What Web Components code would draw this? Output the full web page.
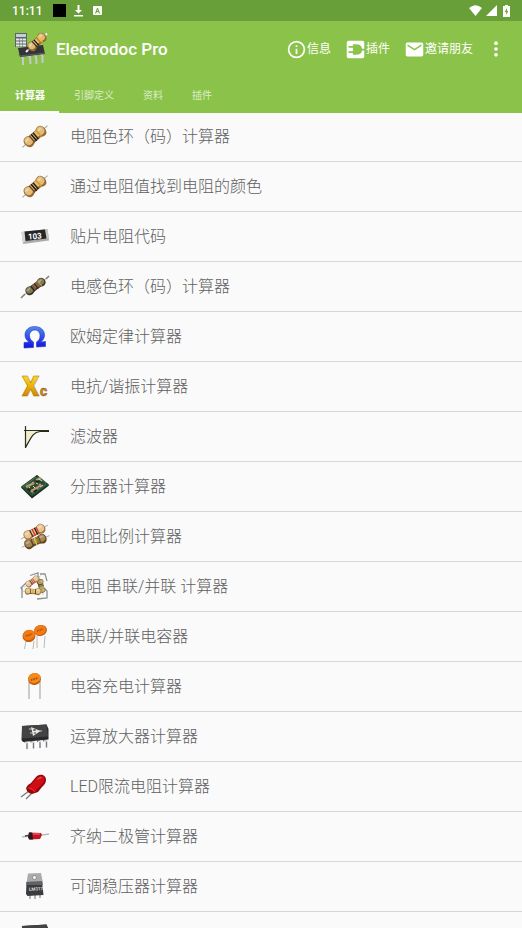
<!DOCTYPE html>
<html lang="zh-CN">
<head>
<meta charset="utf-8">
<meta name="viewport" content="width=device-width, initial-scale=1">
<title>Electrodoc Pro</title>
<style>
  body {
    margin: 0;
    background: #fafafa;
    font-family: Roboto, "Noto Sans CJK SC", sans-serif;
  }
</style>
</head>
<body>
<app-shell>
  <status-bar slot="top">11:11</status-bar>
  <app-bar slot="top">
    Electrodoc Pro
    <action-button slot="actions" icon="info">信息</action-button>
    <action-button slot="actions" icon="plugin">插件</action-button>
    <action-button slot="actions" icon="mail">邀请朋友</action-button>
    <action-button slot="actions" icon="more"></action-button>
  </app-bar>
  <tab-strip slot="top">
    <tab-item selected>计算器</tab-item>
    <tab-item>引脚定义</tab-item>
    <tab-item>资料</tab-item>
    <tab-item>插件</tab-item>
  </tab-strip>

  <tool-row icon="resistor">电阻色环（码）计算器</tool-row>
  <tool-row icon="resistor">通过电阻值找到电阻的颜色</tool-row>
  <tool-row icon="smd">贴片电阻代码</tool-row>
  <tool-row icon="inductor">电感色环（码）计算器</tool-row>
  <tool-row icon="ohm">欧姆定律计算器</tool-row>
  <tool-row icon="reactance">电抗/谐振计算器</tool-row>
  <tool-row icon="filter">滤波器</tool-row>
  <tool-row icon="board">分压器计算器</tool-row>
  <tool-row icon="ratio">电阻比例计算器</tool-row>
  <tool-row icon="series">电阻 串联/并联 计算器</tool-row>
  <tool-row icon="capacitors">串联/并联电容器</tool-row>
  <tool-row icon="capacitor">电容充电计算器</tool-row>
  <tool-row icon="opamp">运算放大器计算器</tool-row>
  <tool-row icon="led">LED限流电阻计算器</tool-row>
  <tool-row icon="zener">齐纳二极管计算器</tool-row>
  <tool-row icon="regulator">可调稳压器计算器</tool-row>
  <tool-row icon="chip"></tool-row>
</app-shell>

<script>
// a resistor lying flat around 0,0 - callers rotate it into place
const resistor = (place, light, dark, bands) => `
  <g transform="${place}">
    <path d="M-17 0H17" stroke="#aaa9a4" stroke-width="1"/>
    <path d="M-8.500-5C-6-5-5-3.800-3.500-3.800H3.500C5-3.800 6-5 8.500-5C11.500-5 13-2.500 13 0S11.500 5 8.500 5C6 5 5 3.800 3.500 3.800H-3.500C-5 3.800-6 5-8.500 5C-11.500 5-13 2.500-13 0S-11.500-5-8.500-5Z" fill="${dark}"/>
    <path d="M-8.500-4.500C-6-4.500-5-3.300-3.500-3.300H3.500C5-3.300 6-4.500 8.500-4.500C11-4.500 12-2.600 12-.500S10.500 3 8 3C6 3 5 2 3.500 2H-3.500C-5 2-6 3-8 3C-10.500 3-12 1-12-.500S-11-4.500-8.500-4.500Z" fill="${light}"/>
    ${bands.map(([x, color]) => `<path d="M${x}-3.700V3.700" stroke="${color}" stroke-width="1.500"/>`).join('')}
    <ellipse cx="8" cy="-2" rx="2.500" ry="1" fill="#fff" opacity=".35"/>
    <ellipse cx="-8.500" cy="-2" rx="2.500" ry="1" fill="#fff" opacity=".35"/>
  </g>`;

const beige = ['#e0bc78', '#96692f'];
const chipBody = `
  <path d="M5 21L7 20L8 22V28M11.500 21L13.500 20L14.500 21.500V27.500M18 20.500L20 19.500L21 21V27M24 20L26 19L27.500 20.500V26.500" stroke="#77777b" stroke-width="1.400"/>
  <path d="M3 5L27.500 3.500L29.500 8V18.500L4 21L2.500 19Z" fill="#29292b"/>
  <path d="M3 5L27.500 3.500L29 15.500L3 17.500Z" fill="#434346"/>
  <path d="M6 21.500H9M12.500 21H15.500M19 20.500H22M25 20H28" stroke="#ddd" stroke-width="1.400"/>`;

const icons = {
  resistor: resistor('translate(16 15.500) rotate(-41) scale(.98 1.150)', ...beige, [[-4, '#70451f'], [-1.500, '#171512'], [1, '#2b2015'], [5, '#d69a20']]),

  smd: `
    <path d="M2.500 11L28.500 8L30 19.500L4 23Z" fill="#aaa"/>
    <path d="M2.500 11L6 10.500L7 20L4 22Z" fill="#d4d4d2"/>
    <path d="M25.500 8.500L28.500 8L30 17.500L27 18Z" fill="#c4c4c2"/>
    <path d="M5.500 10.500L26 8.500L27.500 17.500L6.500 20Z" fill="#252527"/>
    <text x="9" y="18" transform="rotate(-4 16 16)" font-family="Roboto, sans-serif" font-size="8" font-weight="700" fill="#fff">103</text>`,

  inductor: resistor('translate(16.500 15.500) rotate(-37) scale(.88)', '#827b5b', '#393824', [[-4, '#25251e'], [-2, '#8c432c'], [1, '#282820'], [3, '#994f37'], [6, '#b69545']]) + '<path d="M2 27L6 23M27 8L30 5" stroke="#8b7a72" stroke-width="1.500"/>',

  ohm: `
    <defs><linearGradient id="blue" x2="0" y2="1"><stop stop-color="#4e8cf0"/><stop offset="1" stop-color="#1012e2"/></linearGradient></defs>
    <path d="M5 21.500L10 21C7.500 19 6 17 6 14C6 9 10 5.500 15.500 5.500C21.500 5.500 25.500 9 25.500 14C25.500 17 24 19.500 21.500 21L26.500 20.500V25.500L17.500 26V21C20 19.500 21 17.500 21 14.500C21 11.500 19 9 16 9C12.500 9 10.500 11.500 10.500 14.500C10.500 17.500 12 19.500 14.500 21V26.500L5 27Z" fill="url(#blue)" stroke="#233bb5" stroke-width=".600"/>`,

  reactance: `
    <defs><linearGradient id="gold" x2="0" y2="1"><stop stop-color="#ffee35"/><stop offset=".500" stop-color="#e9ad09"/><stop offset="1" stop-color="#b86909"/></linearGradient></defs>
    <text x="3" y="25" font-family="Roboto, sans-serif" font-size="27" font-weight="900" fill="url(#gold)" stroke="#a66d12" stroke-width=".500">X</text>
    <text x="21" y="25" font-family="Roboto, sans-serif" font-size="14" font-weight="900" fill="#c98422" stroke="#80501c" stroke-width=".400">c</text>`,

  filter: `
    <path d="M6.500 10H21C14 11.500 11 17 6.500 25.500Z" fill="#f0efcc"/>
    <path d="M5 9.500H30M6.500 5V27" stroke="#2d301d" stroke-width="1.200" fill="none"/>
    <path d="M6.500 26.500C12 17 14 11 21 10.500H30" stroke="#22281c" stroke-width="1.200" fill="none"/>`,

  board: `
    <path d="M2 16.500L18 4L30 14.500L13 27.500Z" fill="#172719"/>
    <path d="M2 15.500L18 4L30 13.500L13 25.500Z" fill="#284b34"/>
    <path d="M4 16L17 6M13 23L27 13M19 6L27 12" stroke="#598064" stroke-width=".800"/>
    <path d="M7 16L15 12M12 20L21 15M17 9L22 7" stroke="#b6a577" stroke-width="2"/>
    <g fill="#c58b6b"><circle cx="9" cy="15" r="1.500"/><circle cx="14" cy="12" r="1.500"/><circle cx="13" cy="20" r="1.500"/><circle cx="18" cy="17" r="1.500"/><circle cx="21" cy="14" r="1.500"/></g>
    <path d="M10 16L11 17M17 12L19 13M21 16L24 14M20 8L23 10M14 15L16 17" stroke="#ded9c2" stroke-width="1"/>
    <path d="M15 21L18 19M9 18L11 20M17 10L20 11" stroke="#151b16" stroke-width="1.500"/>`,

  ratio: resistor('translate(16.500 20.500) rotate(-23) scale(.89 1)', '#a68655', '#62431f', [[-4, '#4d4337'], [0, '#e1c830'], [3, '#8a7b23'], [5, '#554b28']])
    + resistor('translate(15.500 11) rotate(-27) scale(.89 1)', '#e8c692', '#a7794a', [[-4, '#5c2c21'], [-1, '#e23329'], [2, '#1b1b1b'], [4, '#d13d31']]),

  series: `
    <path d="M11 4.500L19 2V7M21 3L26 3L28 10M3 19L2 17L7 12M3 16L3 27M18 28L28 27V20L24 16" stroke="#8b9292" stroke-width="1.300" fill="none"/>
    ${resistor('translate(22 15) rotate(77) scale(.54 .7)', '#b59c61', '#71592f', [[-3, '#444'], [0, '#696238'], [3, '#cdb53c']])}
    ${resistor('translate(14 20.500) rotate(2) scale(.63 .7)', '#e2c687', '#98713f', [[-4, '#765a25'], [0, '#c6a132'], [4, '#5b4320']])}
    ${resistor('translate(13.500 10.500) rotate(-35) scale(.58 .7)', '#e6c79b', '#a97651', [[-3, '#493126'], [0, '#d23a31'], [3, '#bf553d']])}`,

  capacitors: `
    <path d="M7 20L5.500 28M15 20L14 28M18 15V27M26 15L25 27" stroke="#bbb9b7" stroke-width="1"/>
    <ellipse cx="21.500" cy="9.500" rx="6.500" ry="5.500" transform="rotate(-15 21.500 9.500)" fill="#c85d10"/>
    <ellipse cx="21" cy="9" rx="6" ry="5" transform="rotate(-15 21 9)" fill="#f17c16"/>
    <ellipse cx="10" cy="15" rx="6.500" ry="6" transform="rotate(-20 10 15)" fill="#c75b0c"/>
    <ellipse cx="10" cy="14" rx="6" ry="5" transform="rotate(-20 10 14)" fill="#f47b12"/>
    <path d="M7 15L13 13M18 10L24 8" stroke="#b34c09" stroke-width="1.500" stroke-dasharray="1 .500"/>`,

  capacitor: `
    <path d="M10 11V28M21 10V28" stroke="#b4b2b0" stroke-width="1.300"/>
    <ellipse cx="15.500" cy="8" rx="6.500" ry="6" transform="rotate(-15 15.500 8)" fill="#c65f0c"/>
    <ellipse cx="15.500" cy="7" rx="6" ry="5" transform="rotate(-15 15.500 7)" fill="#f68a1b"/>
    <path d="M12 9L19 7" stroke="#a34c0d" stroke-width="2" stroke-dasharray="1 .700"/>`,

  opamp: chipBody + `
    <path d="M12 6L21.500 10L14 15Z" fill="#e7e7e4"/>
    <path d="M10 8H13M11 12H15M20 10H23" stroke="#ccc" stroke-width="1"/>
    <path d="M14 9H16M15 12H17M16 8V10" stroke="#444" stroke-width="1"/>`,

  chip: chipBody + '<path d="M15 8L20 7.500M10 12L23 11" stroke="#aaa" stroke-width="1"/>',

  led: `
    <path d="M10 20L2 26M13 22L7 28" stroke="#777" stroke-width="1.200"/>
    <path d="M8 20L7 17L9 14L12 12L17 6C21 2 27 4 27 9C27 12 25 14 23 16L19 21L13 23L10 22Z" fill="#95070d"/>
    <path d="M9 17L18 7C22 3.500 26 5 25.500 9C25 12 22 14 19 17L15 21Z" fill="#cf0d15"/>
    <path d="M17 9L20 6.500C21 5.500 23 6 23 7Z" fill="#e05050"/>
    <path d="M9 17C12 17 15 19 16 21" stroke="#e33a3c" stroke-width="1" fill="none"/>`,

  zener: `
    <path d="M3 16L10 15M23 14L30 13" stroke="#b9bcbd" stroke-width="1.500"/>
    <path d="M10 11.500L22 12L23 14L21 18L11 18.500L9 16Z" fill="#bd1726"/>
    <path d="M10 11.500L13 11.500L14 18.500L10 18.500L9 16Z" fill="#261a1c"/>
    <path d="M14 13H21" stroke="#f0525b" stroke-width="1.500"/>
    <path d="M6 15L9 14.500" stroke="#484848" stroke-width="1.500"/>`,

  regulator: `
    <path d="M11 23V28M16 24V28M21 24V27" stroke="#aaa" stroke-width="1.700"/>
    <path d="M9 2.500L22 2L24 12H7.500Z" fill="#a9abac"/>
    <circle cx="15.500" cy="6.500" r="2" fill="#f5f5f5" stroke="#777" stroke-width=".700"/>
    <path d="M7.500 11L23 10.500L24.500 24L8.500 25L7 23Z" fill="#3b3b3d"/>
    <path d="M7.500 11L23 10.500L24 14H7.500Z" fill="#606164"/>
    <text x="10" y="19.500" font-family="Roboto, sans-serif" font-size="4.500" font-weight="700" fill="#ddd" transform="rotate(-3 16 18)">LM317</text>`,

  logo: `
    <path d="M7 23L9 26V33M14 23L16 25L16.500 32M20 22L22 25L22.500 32M26 21L28.500 24V31" stroke="#c5c9cc" stroke-width="2" fill="none"/>
    <path d="M4 16L29 13L31 22L6 25Z" fill="#343438"/>
    <path d="M5 22L6 24L31 21" stroke="#606064" stroke-width="1"/>
    <path d="M1 1H13V15H1Z" fill="#59656a"/>
    <path d="M2 2H12V5H2Z" fill="#c4d0d4"/>
    <path d="M2 7.500H12M2 10.500H12M2 13.500H12" stroke="#e7e8e9" stroke-width="2" stroke-dasharray="3 .500"/>
    ${resistor('translate(23 10) rotate(-42) scale(.82 1)', ...beige, [[-4, '#322318'], [-1, '#111'], [3, '#bb7e25'], [5, '#ebbd46']])}
    <path d="M31.500 3L33 1.500M12 20L14 18" stroke="#eee" stroke-width="2"/>`
};

// toolbar glyphs on the 24 unit material grid
const glyphs = {
  info: '<circle cx="12" cy="12" r="9" fill="none" stroke="#fff" stroke-width="1.900"/><path d="M11 7H13V9H11ZM11 11H13V17H11Z"/>',
  plugin: '<path fill-rule="evenodd" d="M4 2H20Q22 2 22 4V11H19.500Q18.500 6 13 6H9V8H4V10H9V14H4V16H9V18H13Q18.500 18 19.500 13H22V20Q22 22 20 22H4Q2 22 2 20V4Q2 2 4 2Z"/>',
  mail: '<path d="M20 4H4C2.900 4 2 4.900 2 6V18C2 19.100 2.900 20 4 20H20C21.100 20 22 19.100 22 18V6C22 4.900 21.100 4 20 4ZM20 8L12 13L4 8V6L12 11L20 6Z"/>',
  more: '<circle cx="12" cy="5" r="2.200"/><circle cx="12" cy="12" r="2.200"/><circle cx="12" cy="19" r="2.200"/>'
};

class AppShell extends HTMLElement {
  constructor() {
    super();
    this.attachShadow({mode: 'open'}).innerHTML = `
      <style>
        :host { display: flex; flex-direction: column; height: 100vh; }
        header { flex: none; background: #8bc34a; color: #fff; }
        main { flex: 1; min-height: 0; overflow-y: auto; scrollbar-width: none; }
      </style>
      <header><slot name="top"></slot></header>
      <main><slot></slot></main>`;
  }
}

class StatusBar extends HTMLElement {
  constructor() {
    super();
    this.attachShadow({mode: 'open'}).innerHTML = `
      <style>
        :host { display: flex; align-items: center; height: 21px; padding: 0 12px; background: #689f38; font-size: 12px; line-height: 20px; font-weight: 500; }
        svg { fill: #fff; display: block; }
        .left, .right { display: flex; align-items: center; gap: 8px; }
        .left { flex: 1; margin-left: 11px; }
        .right { gap: 4px; }
      </style>
      <slot></slot>
      <div class="left">
        <svg width="13" height="13"><path d="M0 0H13V13H0Z" fill="#000"/></svg>
        <svg width="9" height="12"><path d="M3.500 0H5.500V5H8L4.500 8.500L1 5H3.500ZM0 10H9V11.500H0Z"/></svg>
        <svg width="13" height="9"><path fill-rule="evenodd" d="M3 0H10Q11 0 11 1V8Q11 9 10 9H3Q2 9 2 8V1Q2 0 3 0ZM6 2L4 7.500H5.200L5.700 6H7.300L7.800 7.500H9L7 2ZM6.500 3.300L7 5H6Z"/></svg>
      </div>
      <div class="right">
        <svg width="13" height="11"><path d="M0 3Q6.500-2.500 13 3L6.500 11Z"/></svg>
        <svg width="13" height="11"><path d="M11 0V11H0Z"/></svg>
        <svg width="7" height="12"><path fill-rule="evenodd" d="M2 1V0H5V1H7V12H0V1ZM4 3L1.800 7H3.200V10L5.300 6H4Z"/></svg>
      </div>`;
  }
}

class AppBar extends HTMLElement {
  constructor() {
    super();
    this.attachShadow({mode: 'open'}).innerHTML = `
      <style>
        :host { display: flex; align-items: center; height: 56px; padding: 0 10px 0 14px; }
        svg { flex: none; width: 34px; height: 34px; margin-right: 8px; }
        h1 { flex: 1; margin: 0; font-size: 17px; line-height: 24px; font-weight: 500; white-space: nowrap; }
        nav { display: flex; }
      </style>
      <svg viewBox="0 0 34 34" fill="none">${icons.logo}</svg>
      <h1><slot></slot></h1>
      <nav><slot name="actions"></slot></nav>`;
  }
}

class ActionButton extends HTMLElement {
  constructor() {
    super();
    const icon = this.getAttribute('icon');
    this.attachShadow({mode: 'open'}).innerHTML = `
      <style>
        :host { display: block; }
        button { display: flex; align-items: center; height: 48px; padding: 0 7px; border: 0; background: none; color: inherit; font: inherit; font-size: 12px; line-height: 20px; white-space: nowrap; }
        svg { width: 21px; height: 21px; fill: #fff; }
        .more { width: 32px; padding: 0; justify-content: center; }
        .more svg { width: 20px; height: 20px; }
      </style>
      <button type="button" class="${icon}" ${icon === 'more' ? 'aria-label="更多"' : ''}>
        <svg viewBox="0 0 24 24">${glyphs[icon]}</svg><slot></slot>
      </button>`;
  }
}

class TabStrip extends HTMLElement {
  constructor() {
    super();
    this.attachShadow({mode: 'open'}).innerHTML = `
      <style>
        :host { display: flex; height: 36px; }
      </style>
      <slot></slot>`;
  }
}

class TabItem extends HTMLElement {
  constructor() {
    super();
    this.attachShadow({mode: 'open'}).innerHTML = `
      <style>
        :host { display: flex; color: #dcedc8; }
        :host([selected]) { color: #fff; font-weight: 700; }
        button { padding: 4px 14px 0 15px; border: 0; border-bottom: 2px solid transparent; background: none; color: inherit; font: inherit; font-size: 10px; line-height: 16px; }
        :host([selected]) button { border-color: #fff; }
      </style>
      <button type="button"><slot></slot></button>`;
  }
}

class ToolRow extends HTMLElement {
  constructor() {
    super();
    this.attachShadow({mode: 'open'}).innerHTML = `
      <style>
        :host { display: block; border-bottom: 1px solid #d6d6d6; }
        :host(:first-of-type) { margin-top: -1px; }
        a { display: flex; align-items: center; gap: 19px; height: 49px; padding: 0 19px; color: #606060; font-size: 16px; line-height: 24px; font-weight: 300; text-decoration: none; }
        svg { flex: none; width: 32px; height: 32px; overflow: visible; }
      </style>
      <a href="#"><svg viewBox="0 0 32 32" fill="none">${icons[this.getAttribute('icon')]}</svg><span><slot></slot></span></a>`;
  }
}

customElements.define('app-shell', AppShell);
customElements.define('status-bar', StatusBar);
customElements.define('app-bar', AppBar);
customElements.define('action-button', ActionButton);
customElements.define('tab-strip', TabStrip);
customElements.define('tab-item', TabItem);
customElements.define('tool-row', ToolRow);
</script>
</body>
</html>
